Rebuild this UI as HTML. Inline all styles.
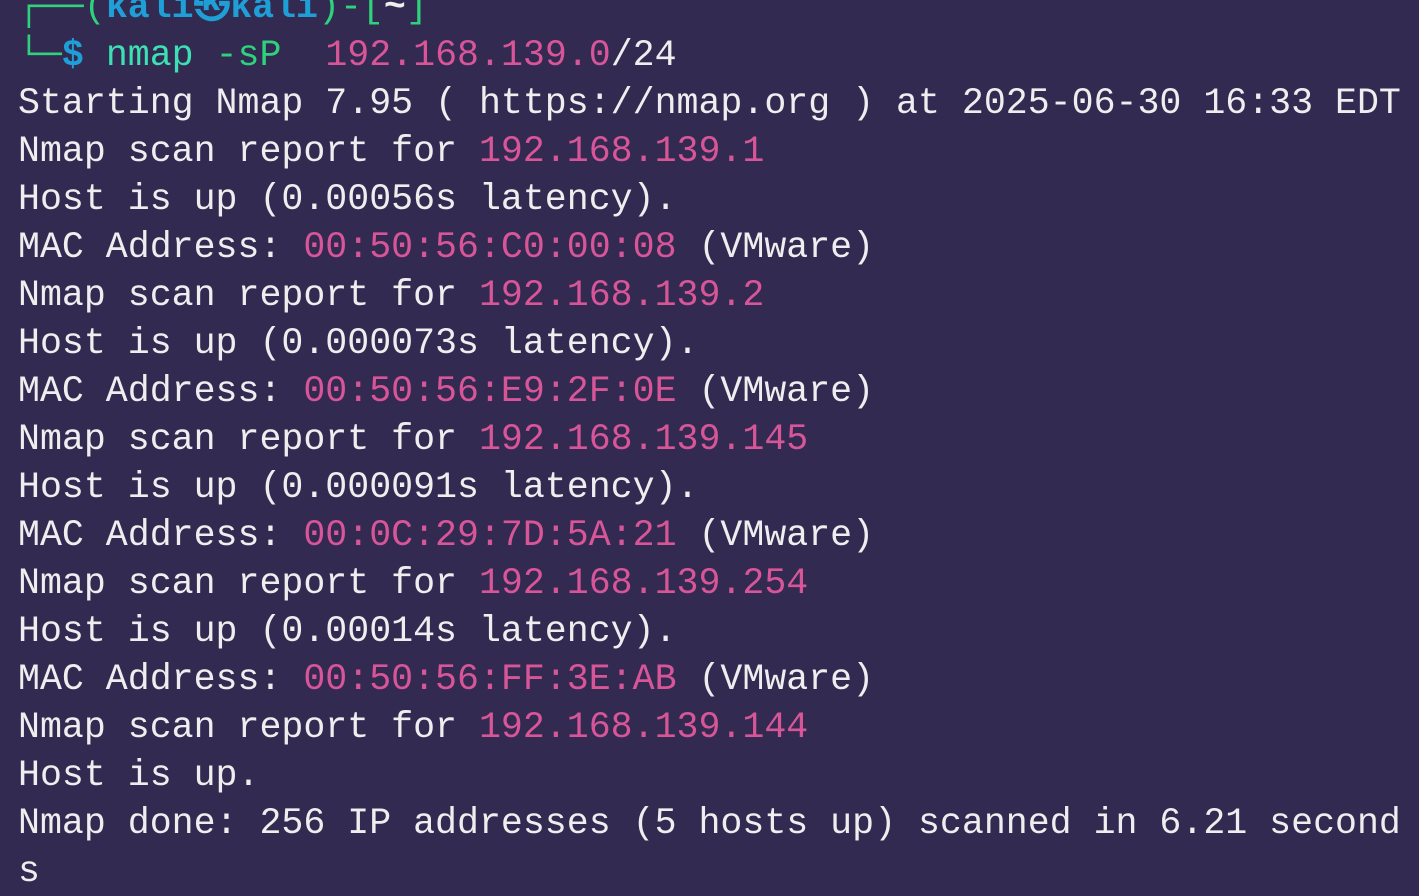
<!DOCTYPE html>
<html><head><meta charset="utf-8"><style>
html,body{margin:0;padding:0;background:#332a52;width:1419px;height:891px;overflow:hidden}
pre{margin:0;position:absolute;left:18px;top:-16px;font-family:"Liberation Mono","DejaVu Sans Mono",monospace;font-size:36.6px;line-height:48px;color:#eeeeee;white-space:pre}
.p{color:#d85598}.g{color:#2fd27c}.b{color:#1e9fd6;font-weight:bold}.t{color:#3de0b5}.w{color:#eeeeee;font-weight:bold}
</style></head><body>
<pre><span class="g">┌──(</span><span class="b">kali㉿kali</span><span class="g">)-[</span><span class="w">~</span><span class="g">]</span>
<span class="g">└─</span><span class="b">$</span> <span class="t">nmap</span> <span class="g">-sP</span>  <span class="p">192.168.139.0</span>/24
Starting Nmap 7.95 ( https://nmap.org ) at 2025-06-30 16:33 EDT
Nmap scan report for <span class="p">192.168.139.1</span>
Host is up (0.00056s latency).
MAC Address: <span class="p">00:50:56:C0:00:08</span> (VMware)
Nmap scan report for <span class="p">192.168.139.2</span>
Host is up (0.000073s latency).
MAC Address: <span class="p">00:50:56:E9:2F:0E</span> (VMware)
Nmap scan report for <span class="p">192.168.139.145</span>
Host is up (0.000091s latency).
MAC Address: <span class="p">00:0C:29:7D:5A:21</span> (VMware)
Nmap scan report for <span class="p">192.168.139.254</span>
Host is up (0.00014s latency).
MAC Address: <span class="p">00:50:56:FF:3E:AB</span> (VMware)
Nmap scan report for <span class="p">192.168.139.144</span>
Host is up.
Nmap done: 256 IP addresses (5 hosts up) scanned in 6.21 second
s</pre>
</body></html>
